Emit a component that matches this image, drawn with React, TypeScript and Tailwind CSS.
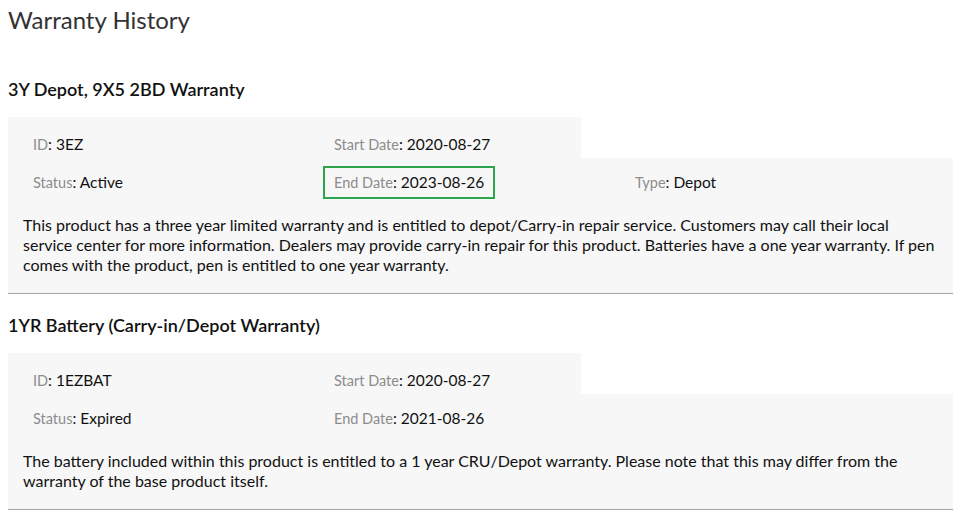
import React from 'react';

interface Field {
  label: string;
  value: string;
  highlight?: boolean;
}

interface Warranty {
  title: string;
  top: Field[];
  bottom: Field[];
  description: string;
}

const warranties: Warranty[] = [
  {
    title: '3Y Depot, 9X5 2BD Warranty',
    top: [
      { label: 'ID', value: '3EZ' },
      { label: 'Start Date', value: '2020-08-27' },
    ],
    bottom: [
      { label: 'Status', value: 'Active' },
      { label: 'End Date', value: '2023-08-26', highlight: true },
      { label: 'Type', value: 'Depot' },
    ],
    description:
      'This product has a three year limited warranty and is entitled to depot/Carry-in repair service. Customers may call their local service center for more information. Dealers may provide carry-in repair for this product. Batteries have a one year warranty. If pen comes with the product, pen is entitled to one year warranty.',
  },
  {
    title: '1YR Battery (Carry-in/Depot Warranty)',
    top: [
      { label: 'ID', value: '1EZBAT' },
      { label: 'Start Date', value: '2020-08-27' },
    ],
    bottom: [
      { label: 'Status', value: 'Expired' },
      { label: 'End Date', value: '2021-08-26' },
    ],
    description:
      'The battery included within this product is entitled to a 1 year CRU/Depot warranty. Please note that this may differ from the warranty of the base product itself.',
  },
];

const FieldCell = ({ label, value, highlight }: Field) => (
  <div className="w-[301px] shrink-0 pl-[14px] flex items-center">
    <span
      className={
        highlight
          ? 'inline-flex items-center h-[33px] px-[9px] border-2 border-[#2ea44f]'
          : 'inline-flex items-center h-[33px] px-[9px] border-2 border-transparent'
      }
    >
      <span className="text-[14.5px] text-[#8c8c8c]">{label}</span>
      <span className="text-[15.5px] text-[#111]">: {value}</span>
    </span>
  </div>
);

const WarrantyBlock = ({ w }: { w: Warranty }) => (
  <section>
    <h2 className="text-[18px] font-semibold text-[#111] mt-[20px] leading-[22px]">{w.title}</h2>
    <div className="mt-[17px]">
      <div className="w-[573px] h-[41px] bg-[#f7f7f7] flex items-start pt-[11px]">
        {w.top.map((f) => (
          <FieldCell key={f.label} {...f} />
        ))}
      </div>
      <div className="bg-[#f7f7f7] pt-[8px] pb-[18px]">
        <div className="flex h-[33px] items-center">
          {w.bottom.map((f) => (
            <FieldCell key={f.label} {...f} />
          ))}
        </div>
        <p className="pl-[15px] pr-[14px] pt-[16px] text-[16px] leading-[20px] text-[#111]">
          {w.description}
        </p>
      </div>
    </div>
    <div className="h-px bg-[#a3a3a3]" />
  </section>
);

export default function App() {
  return (
    <div className="bg-white min-h-[525px] px-2 pt-[6px] font-['Lato',sans-serif]">
      <div className="w-[945px]">
        <h1 className="text-[24px] leading-[28px] text-[#333] font-normal mb-[44px]">Warranty History</h1>
        {warranties.map((w) => (
          <WarrantyBlock key={w.title} w={w} />
        ))}
      </div>
    </div>
  );
}
